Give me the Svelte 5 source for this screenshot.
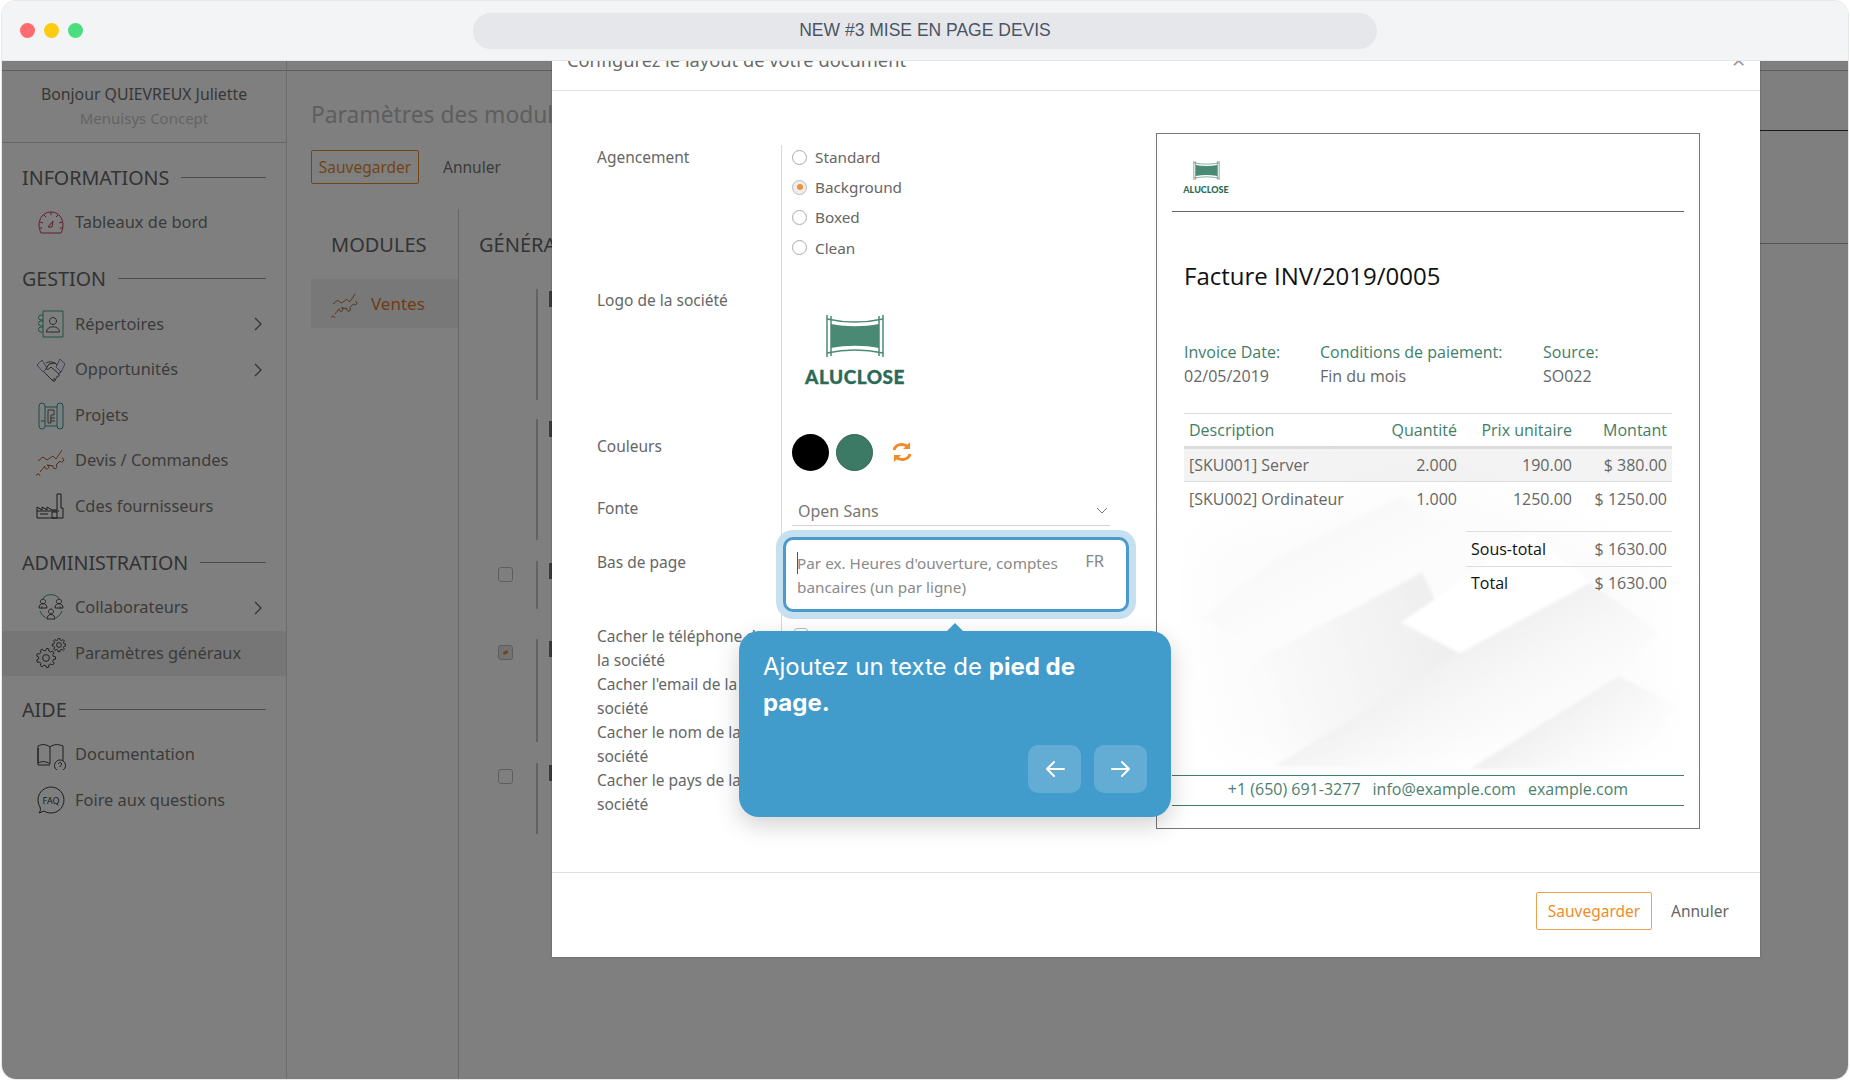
<script>
  function gear(cx, cy, r1, r2, n) {
    let d = '';
    const step = (Math.PI * 2) / n;
    for (let k = 0; k < n; k++) {
      const a = k * step;
      const pts = [[r1, a - step * 0.3], [r2, a - step * 0.18], [r2, a + step * 0.18], [r1, a + step * 0.3]];
      for (let j = 0; j < pts.length; j++) {
        const x = (cx + pts[j][0] * Math.cos(pts[j][1])).toFixed(1);
        const y = (cy + pts[j][0] * Math.sin(pts[j][1])).toFixed(1);
        d += (k === 0 && j === 0 ? 'M' : 'L') + x + ' ' + y;
      }
    }
    return d + 'Z';
  }
  function ring(cx, cy, r) {
    return `M${cx - r} ${cy}a${r} ${r} 0 1 0 ${r * 2} 0a${r} ${r} 0 1 0 ${-r * 2} 0Z`;
  }
  const I = {
    gauge: [['#c4365a', 'M5 25C0 15 5 4 15 4s15 11 10 21ZM15 4v3M8 7l2 2M22 7l-2 2M4 14l3 1M26 14l-3 1M4 20h2M26 20h-2M12 19l5-6-1 6Z']],
    contact: [['#3aa57c', 'M7 2h20v26H7ZM7 6H5a2 2 0 0 0 0 5h2M7 12H5a2 2 0 0 0 0 5h2M7 18H5a2 2 0 0 0 0 5h2'], ['#555', 'M17 8.5a3.5 3.5 0 1 1-.01 0ZM10.5 23c0-7 13-7 13 0Z']],
    hands: [['#8d7aa6', 'M1 10l5-5 5 8-4 4ZM29 9l-5-5-4 8 5 5Z'], ['#555', 'M10 8c4-2 6-1 9 0l2 2M19 8l-6 1-3 5c2 1 3 0 5-2l8 7c1 2-1 3-2 2M8 17l8 8c2 1 3-1 2-2M12 21l5 5c2 1 3-1 2-2M18 24c2 1 3-1 3-3M25 17l-3 2']],
    plan: [['#2b9a9a', 'M3 6a3 3 0 0 1 6 0v20a3 3 0 0 1-6 0ZM21 6a3 3 0 0 1 6 0v20a3 3 0 0 1-6 0ZM9 7h12M9 26h12'], ['#666', 'M12 10h6v5h-3v8h-3ZM5 21h4M14 18h5M14 21h5']],
    chart: [['#b9602c', 'M2 15l5-4 4 3 6-4 3 3 6-9M2 28a2 2 0 1 0 .01 0M4 26l5-6a2 2 0 1 0 2-1'], ['#8a5a3a', 'M11 19l6 1a2 2 0 1 0 3-1l4-4a2 2 0 1 0 2-3']],
    factory: [['#333', 'M1 27V16l5 3v-3l5 3v-3l5 3h5V3h4v14h2v10ZM1 20h22M4 23h8M16 21h5v6h-5Z']],
    team: [['#3f9a7c', 'M7 5a11 11 0 0 1 16 0M4 18a12 12 0 0 0 6 7M26 18a12 12 0 0 1-6 7M6 16a13 13 0 0 1 0-3M24 16a13 13 0 0 0 0-3'], ['#444', 'M7 6a2.5 2.5 0 1 1-.01 0ZM3 15c0-6 8-6 8 0ZM23 6a2.5 2.5 0 1 1-.01 0ZM19 15c0-6 8-6 8 0ZM15 16a2.5 2.5 0 1 1-.01 0ZM11 26c0-6 8-6 8 0Z']],
    gears: [['#444', gear(10, 20, 7.6, 9.6, 9) + ring(10, 20, 3.4) + gear(23, 7, 5.2, 6.8, 8) + ring(23, 7, 2.4)]],
    doc: [['#3a3a3a', 'M2 6c4-2 8-2 12 1v17c-4-3-8-3-12-1ZM14 7c4-3 8-3 13-1v15M2 8v17h12M24 20a5.5 5.5 0 1 0 .01 0M22.5 24c0-2 3-2 3 0 0 1.500-1.500 1.500-1.500 3']],
    faq: [['#3a3a3a', 'M4 22a13 13 0 1 1 4 4l-5 2c1-1 2-3 1-6Z']]
  };
  const sections = [
    { t: 'INFORMATIONS', items: [{ n: 'Tableaux de bord', i: 'gauge' }] },
    { t: 'GESTION', items: [
      { n: 'Répertoires', i: 'contact', c: 1 }, { n: 'Opportunités', i: 'hands', c: 1 }, { n: 'Projets', i: 'plan' },
      { n: 'Devis / Commandes', i: 'chart' }, { n: 'Cdes fournisseurs', i: 'factory' }] },
    { t: 'ADMINISTRATION', items: [{ n: 'Collaborateurs', i: 'team', c: 1 }, { n: 'Paramètres généraux', i: 'gears', a: 1 }] },
    { t: 'AIDE', items: [{ n: 'Documentation', i: 'doc' }, { n: 'Foire aux questions', i: 'faq' }] }
  ];
  const bars = [
    { h: 111, m: 19 }, { h: 121, m: 21 }, { h: 48, m: 30, box: 1 }, { h: 103, m: 21, box: 2 }, { h: 71, m: 0, box: 1 }
  ];
  const radios = ['Standard', 'Background', 'Boxed', 'Clean'];
  const hides = ['Cacher le téléphone de la société', "Cacher l'email de la société", 'Cacher le nom de la société', 'Cacher le pays de la société'];
  const lines = [
    { d: '[SKU001] Server', q: '2.000', p: '190.00', m: '$ 380.00' },
    { d: '[SKU002] Ordinateur', q: '1.000', p: '1250.00', m: '$ 1250.00' }
  ];
</script>

{#snippet logo(cls)}
  <div class="logo {cls}">
    <svg viewBox="0 0 58 42" aria-hidden="true">
      <path d="M1 0v42M5 1v40M53 1v40M57 0v42" class="posts" />
      <path d="M1 4c18 4 38 4 56 0M1 38c18-4 38-4 56 0" class="posts" />
      <path d="M5 9c16 3 32 3 48 0v24c-16-3-32-3-48 0Z" class="cloth" />
    </svg>
    <span>ALUCLOSE</span>
  </div>
{/snippet}

<div class="window">
  <header class="titlebar">
    <div class="dots"><i class="red"></i><i class="yellow"></i><i class="green"></i></div>
    <div class="pill">NEW #3 MISE EN PAGE DEVIS</div>
  </header>

  <div class="stage">
    <aside class="sidebar">
      <div class="strip"></div>
      <div class="hello">
        <div class="who">Bonjour QUIEVREUX Juliette</div>
        <div class="org">Menuisys Concept</div>
      </div>
      <nav>
        {#each sections as s}
          <section>
            <h3><span>{s.t}</span><b></b></h3>
            {#each s.items as it}
              <div class="item" class:active={it.a}>
                <svg class="ico" viewBox="0 0 30 30" aria-hidden="true">
                  {#each I[it.i] as p}<path d={p[1]} stroke={p[0]} />{/each}
                  {#if it.i === 'faq'}<text x="15" y="18.500" class="faqt">FAQ</text>{/if}
                </svg>
                <span class="item-t">{it.n}</span>
                {#if it.c}
                  <svg class="chev" viewBox="0 0 8 14" aria-hidden="true"><path d="M1 1l6 6-6 6" /></svg>
                {/if}
              </div>
            {/each}
          </section>
        {/each}
      </nav>
    </aside>

    <main class="main">
      <div class="strip"></div>
      <div class="main-row">
        <div class="main-left">
          <h1>Paramètres des modules</h1>
          <div class="actions">
            <button class="ghost-save">Sauvegarder</button>
            <button class="ghost">Annuler</button>
          </div>
          <div class="panels">
            <div class="modules">
              <h2>MODULES</h2>
              <div class="mod-row">
                <svg class="ico-s" viewBox="0 0 30 30" aria-hidden="true">
                  {#each I.chart as p}<path d={p[1]} stroke={p[0]} />{/each}
                </svg>
                <span>Ventes</span>
              </div>
            </div>
            <div class="general">
              <h2>GÉNÉRAL</h2>
              <div class="settings">
                {#each bars as b}
                  <div class="setting" style="height:{b.h}px;margin-bottom:{b.m}px">
                    <div class="slot">
                      {#if b.box}<i class="chk" class:on={b.box === 2}></i>{/if}
                    </div>
                    <div class="bar"><i></i></div>
                  </div>
                {/each}
              </div>
            </div>
          </div>
        </div>
        <div class="rail"><div></div></div>
      </div>
    </main>

    <div class="overlay"></div>

    <div class="modal">
      <div class="m-head">
        <span>Configurez le layout de votre document</span>
        <span class="x">×</span>
      </div>

      <div class="m-body">
        <div class="form">
          <div class="row r1">
            <span class="lab">Agencement</span>
            <div class="val radios">
              {#each radios as r, i}
                <div class="radio"><i class:sel={i === 1}></i><span>{r}</span></div>
              {/each}
            </div>
          </div>
          <div class="row r2">
            <span class="lab">Logo de la société</span>
            <div class="val logo-cell">{@render logo('big')}</div>
          </div>
          <div class="row r3">
            <span class="lab">Couleurs</span>
            <div class="val colors">
              <i class="c1"></i><i class="c2"></i>
              <svg viewBox="0 0 20 22" aria-hidden="true">
                <path d="M2 9a8 7 0 0 1 14-3M18 13a8 7 0 0 1-14 3" />
                <path d="M18 1v7h-7ZM2 21v-7h7Z" class="solid" />
              </svg>
            </div>
          </div>
          <div class="row r4">
            <span class="lab">Fonte</span>
            <div class="val">
              <div class="select">
                <span>Open Sans</span>
                <svg viewBox="0 0 12 7" aria-hidden="true"><path d="M1 1l5 5 5-5" /></svg>
              </div>
            </div>
          </div>
          <div class="row r5">
            <span class="lab">Bas de page</span>
            <div class="val">
              <div class="foot-box">
                <div class="ph"><i class="caret"></i>Par ex. Heures d'ouverture, comptes bancaires (un par ligne)</div>
                <span class="fr">FR</span>
              </div>
            </div>
          </div>
          {#each hides as h}
            <div class="row r6">
              <span class="lab">{h}</span>
              <div class="val"><i class="mini"></i></div>
            </div>
          {/each}
        </div>

        <div class="invoice">
          <svg class="wash" viewBox="1156 133 544 696" aria-hidden="true">
            <defs>
              <linearGradient id="gl" gradientUnits="userSpaceOnUse" x1="1250" y1="720" x2="1460" y2="654">
                <stop offset="0" stop-color="#eeeeee" stop-opacity="0" />
                <stop offset="1" stop-color="#eeeeee" />
              </linearGradient>
              <linearGradient id="gr" gradientUnits="userSpaceOnUse" x1="1490" y1="620" x2="1550" y2="730">
                <stop offset="0" stop-color="#eeeeee" />
                <stop offset="1" stop-color="#f8f8f8" stop-opacity="0" />
              </linearGradient>
              <linearGradient id="gb" gradientUnits="userSpaceOnUse" x1="1545" y1="723" x2="1600" y2="795">
                <stop offset="0" stop-color="#f1f1f1" />
                <stop offset="1" stop-color="#f8f8f8" stop-opacity="0" />
              </linearGradient>
              <linearGradient id="gu" gradientUnits="userSpaceOnUse" x1="1300" y1="540" x2="1340" y2="620">
                <stop offset="0" stop-color="#f8f8f8" />
                <stop offset="1" stop-color="#fbfbfb" stop-opacity="0" />
              </linearGradient>
              <filter id="soft"><feGaussianBlur stdDeviation="1.500" /></filter>
              <filter id="soft2"><feGaussianBlur stdDeviation="22" /></filter>
            </defs>
            <path d="M1195 540l240-70 215 90 15 190-440 10-30-130Z" fill="#fcfcfc" filter="url(#soft2)" />
            <g filter="url(#soft)">
              <path d="M1277 557l124-60 120 72-60 85-199 4-60-40Z" fill="url(#gu)" />
              <path d="M1260 658l162-85 38 81-186 113-80-40Z" fill="url(#gl)" />
              <path d="M1401 623l59 31 131-71-60-50Z" fill="#fff" />
              <path d="M1460 654l131-71 70 50-42 44-149 93-196-3Z" fill="url(#gr)" />
              <path d="M1470 770l149-93 60 30-40 63Z" fill="url(#gb)" />
            </g>
          </svg>
          <div class="i-top">{@render logo('small')}</div>
          <h4>Facture INV/2019/0005</h4>
          <div class="meta">
            <div class="m1"><b>Invoice Date:</b><span>02/05/2019</span></div>
            <div class="m2"><b>Conditions de paiement:</b><span>Fin du mois</span></div>
            <div class="m3"><b>Source:</b><span>SO022</span></div>
          </div>
          <table class="lines">
            <thead>
              <tr><th class="d">Description</th><th>Quantité</th><th>Prix unitaire</th><th>Montant</th></tr>
            </thead>
            <tbody>
              {#each lines as l, i}
                <tr class:shade={i === 0}><td class="d">{l.d}</td><td>{l.q}</td><td>{l.p}</td><td>{l.m}</td></tr>
              {/each}
            </tbody>
          </table>
          <div class="totals">
            <div><span>Sous-total</span><em>$ 1630.00</em></div>
            <div><span>Total</span><em>$ 1630.00</em></div>
          </div>
          <div class="i-foot">
            <span>+1 (650) 691-3277</span><span>info@example.com</span><span>example.com</span>
          </div>
        </div>
      </div>

      <div class="m-foot">
        <button class="save">Sauvegarder</button>
        <button class="cancel">Annuler</button>
      </div>

      <div class="tip">
        <p>Ajoutez un texte de <strong>pied de page.</strong></p>
        <div class="tip-nav">
          <button aria-label="Précédent"><svg viewBox="0 0 20 18"><path d="M19 9H2M9 2L2 9l7 7" /></svg></button>
          <button aria-label="Suivant"><svg viewBox="0 0 20 18"><path d="M1 9h17M11 2l7 7-7 7" /></svg></button>
        </div>
      </div>
    </div>
  </div>
</div>

<style>
  :global(body) { margin: 0; background: #fff; }
  * { box-sizing: border-box; }
  .window {
    width: 1846px; height: 1078px; margin: 1px 2px;
    border-radius: 14px; overflow: hidden;
    display: flex; flex-direction: column;
    box-shadow: 0 0 0 1px #e8e8e8;
    font-family: "Noto Sans", sans-serif; color: #666;
  }
  .titlebar { height: 60px; background: #f3f4f6; display: flex; align-items: center; position: relative; flex: none; border-bottom: 1px solid #e6e7e9; }
  .dots { display: flex; gap: 9px; margin-left: 18px; margin-top: -1px; }
  .dots i { width: 15px; height: 15px; border-radius: 50%; display: block; }
  .red { background: #ff6b6f; } .yellow { background: #fdcb12; } .green { background: #4ade80; }
  .pill {
    width: 904px; height: 36px; border-radius: 18px; background: #e5e7eb;
    margin-left: 390px;
    display: flex; align-items: center; justify-content: center;
    font: 17.500px "Liberation Sans", sans-serif; color: #4b5563;
  }
  .stage { flex: 1; position: relative; display: flex; overflow: hidden; background: #fff; }
  .strip { height: 10px; border-bottom: 1px solid #b8b8b8; }

  .sidebar { width: 285px; flex: none; border-right: 1px solid #d8d8d8; background: #fff; }
  .hello { height: 72px; border-bottom: 1px solid #ccc; text-align: center; padding-top: 11px; }
  .who { font-size: 15.800px; line-height: 24px; color: #6e6e6e; }
  .org { font-size: 15px; line-height: 24px; color: #c8c8c8; }
  nav { padding: 11px 0 0 0; }
  section { margin-bottom: 10px; }
  h3 { margin: 0; height: 46px; padding: 0 20px; display: flex; align-items: center; gap: 12px; font-size: 19.700px; font-weight: 400; color: #666; }
  h3 b { flex: 1; height: 1px; background: #999; }
  .item { height: 45.500px; display: flex; align-items: center; padding-left: 34px; font-size: 16.400px; color: #777; }
  .item-t { margin-top: -2px; }
  .item.active { background: #ececec; }
  .ico { width: 30px; height: 30px; margin-right: 9px; flex: none; }
  .ico path, .ico-s path { fill: none; stroke-width: 1; }
  .faqt { font: 9px "Noto Sans", sans-serif; fill: #3a3a3a; text-anchor: middle; }
  .chev { width: 8px; height: 14px; margin-left: auto; margin-right: 24px; }
  .chev path { fill: none; stroke: #666; stroke-width: 1.300; }

  .main { flex: 1; display: flex; flex-direction: column; min-width: 0; }
  .main-row { flex: 1; display: flex; min-height: 0; }
  .main-left { flex: 1; padding-left: 24px; min-width: 0; display: flex; flex-direction: column; }
  .rail { width: 88px; padding-top: 59px; flex: none; }
  .rail div { height: 114px; border-top: 1px solid #333; border-bottom: 1px solid #aaa; }
  h1 { margin: 24px 0 0; font-size: 22.800px; font-weight: 400; line-height: 40px; color: #bcbcbc; white-space: nowrap; overflow: hidden; }
  .actions { display: flex; gap: 24px; margin-top: 15px; align-items: center; }
  button { font-family: inherit; background: none; border: 0; padding: 0; }
  .ghost-save { width: 108px; height: 34px; border: 1px solid #e58a2e; border-radius: 2px; color: #e58a2e; font-size: 15.500px; }
  .ghost { color: #777; font-size: 15.500px; }
  .panels { flex: 1; margin-top: 25px; display: flex; min-height: 0; }
  .modules { width: 148px; border-right: 1px solid #cfcfcf; flex: none; }
  h2 { margin: 0; font-size: 20px; font-weight: 400; color: #666; line-height: 26px; padding: 23px 0 0 20px; height: 70px; }
  .mod-row { height: 49px; background: #f0f0f0; display: flex; align-items: center; padding-left: 20px; gap: 12px; color: #e2762a; font-size: 17px; }
  .ico-s { width: 28px; height: 28px; }
  .general { flex: 1; }
  .settings { margin-top: 10px; padding-left: 39px; }
  .setting { display: flex; }
  .slot { width: 38px; padding-top: 6px; }
  .chk { display: block; width: 15px; height: 15px; border: 1px solid #bbb; border-radius: 3px; background: #fff; }
  .chk.on { background: #e4e4e4; box-shadow: inset 0 0 0 3px #e4e4e4; position: relative; }
  .chk.on::after { content: ""; position: absolute; left: 4px; top: 5px; width: 5px; height: 3px; background: #e58a2e; transform: rotate(-30deg); }
  .bar { border-left: 2px solid #c4c4c4; padding-left: 11px; }
  .bar i { display: block; width: 4px; height: 16px; margin-top: 2px; background: #777; }

  .overlay { position: absolute; inset: 0; background: rgba(0, 0, 0, .5); }

  .modal {
    position: absolute; left: 550px; top: 0; width: 1207.500px; height: 896px;
    background: #fff; display: flex; flex-direction: column;
    box-shadow: 0 0 2px rgba(0, 0, 0, .3);
  }
  .m-head {
    height: 30px; flex: none; border-bottom: 1px solid #dee2e6;
    display: flex; align-items: flex-end; justify-content: space-between;
    padding: 0 16px 18px 15px; overflow: hidden;
    font-size: 18.300px; line-height: 24px; color: #6a6a6a;
  }
  .x { font-size: 24px; line-height: 24px; color: #999; margin-right: -2px; }
  .m-body { flex: 1; position: relative; display: flex; padding: 42px 0 0 45px; min-height: 0; }
  .form { width: 559px; padding-top: 12px; flex: none; font-size: 15.500px; color: #666; }
  .row { display: flex; line-height: 24px; }
  .lab { width: 184px; flex: none; padding-right: 12px; }
  .val { flex: 1; border-left: 1px solid #d8d8d8; padding-left: 10px; }
  .r1 { height: 143px; } .r2 { height: 146px; } .r3 { height: 62px; } .r4 { height: 54px; } .r5 { height: 74px; } .r6 { height: 48px; }
  .radio { height: 30.200px; display: flex; align-items: center; gap: 8px; margin-top: -3px; margin-bottom: 3px; font-size: 15.300px; }
  .radio i { width: 15px; height: 15px; border-radius: 50%; border: 1px solid #aaa; display: block; position: relative; }
  .radio i.sel { background: #eee; border-color: #bbb; }
  .radio i.sel::after { content: ""; position: absolute; inset: 3.500px; border-radius: 50%; background: #f0913a; }
  .logo { display: flex; flex-direction: column; align-items: center; }
  .logo svg { display: block; overflow: visible; }
  .logo span { font-family: Lato, sans-serif; font-weight: 900; color: #2c6a55; line-height: 1; }
  .posts { fill: none; stroke: #4d8a76; stroke-width: 1.500; }
  .cloth { fill: #4a8a74; }
  .logo-cell { padding-top: 27px; padding-left: 23px; }
  .big { width: 100px; }
  .big svg { width: 58px; height: 42px; }
  .big span { font-size: 19px; margin-top: 10px; letter-spacing: .5px; -webkit-text-stroke: .3px #2c6a55; }
  .colors { display: flex; align-items: flex-start; gap: 7px; }
  .colors i { width: 37px; height: 37px; border-radius: 50%; display: block; }
  .c1 { background: #000; } .c2 { background: #3c7a65; border: 1px solid #2f6a55; }
  .colors svg { width: 20px; height: 22px; margin: 7px 0 0 12px; }
  .colors path { fill: none; stroke: #f28c28; stroke-width: 3; }
  .colors path.solid { fill: #f28c28; stroke: none; }
  .select { width: 318px; height: 30px; border-bottom: 1px solid #d0d4d8; display: flex; align-items: center; justify-content: space-between; padding: 0 2px 0 6px; color: #777; font-size: 16px; }
  .select svg { width: 12px; height: 7px; }
  .select path { fill: none; stroke: #777; stroke-width: 1; }
  .foot-box {
    width: 346px; height: 75px; margin: -13px 0 0 -9px; padding: 11px 22px 0 11px;
    border: 3px solid #4a9bcc; border-radius: 10px; background: #fff;
    box-shadow: 0 0 0 7px #c6e0ef;
    display: flex; justify-content: space-between;
    position: relative;
  }
  .ph { width: 272px; color: #8a8a8a; font-size: 15.300px; position: relative; }
  .caret { position: absolute; left: 0; top: 1px; width: 1px; height: 22px; background: #555; }
  .fr { color: #888; font-size: 16.500px; margin-top: -2px; }
  .mini { display: block; width: 14px; height: 14px; border: 1px solid #bbb; border-radius: 3px; margin: 4px 0 0 2px; }

  .invoice {
    width: 544px; height: 696px; flex: none;
    border: 1px solid #777; position: relative; overflow: hidden;
    display: flex; flex-direction: column; padding: 0 15px 22px;
    font-family: "Open Sans", sans-serif; font-size: 16px; color: #666;
  }
  .wash { position: absolute; inset: 0; width: 100%; height: 100%; }
  .invoice > :not(.wash) { position: relative; }
  .i-top { height: 78px; flex: none; border-bottom: 1px solid #666; padding: 27px 0 0 12px; }
  .small { width: 44px; }
  .small svg { width: 27px; height: 19px; }
  .small span { font-size: 9px; margin-top: 5px; }
  h4 { margin: 47px 0 0 12px; font-size: 24px; font-weight: 400; color: #111; line-height: 34px; }
  .meta { display: flex; margin: 47px 0 0 12px; line-height: 24px; }
  .meta div { display: flex; flex-direction: column; }
  .meta b { font-weight: 400; color: #3f7e68; }
  .m1 { width: 136px; } .m2 { width: 223px; }
  .lines { border-collapse: collapse; margin: 25px 0 0 12px; width: 488px; table-layout: fixed; border-top: 1px solid #dcdcdc; }
  th, td { text-align: right; padding: 0 5px; font-weight: 400; white-space: nowrap; }
  th:nth-child(1) { width: 196px; } th:nth-child(2) { width: 82px; } th:nth-child(3) { width: 115px; }
  .lines .d { text-align: left; }
  th { color: #3f7e68; height: 34px; border-bottom: 3px solid #ddd; }
  td { height: 34px; border-bottom: 1px solid #ddd; }
  tr:last-child td { border-bottom: 0; }
  .shade td { background: rgba(225, 225, 225, .4); }
  .totals { width: 206px; align-self: flex-end; margin: 15px 12px 0 0; border-top: 1px solid #ddd; }
  .totals div { height: 34px; display: flex; justify-content: space-between; align-items: center; padding: 0 5px; color: #111; }
  .totals div + div { border-top: 1px solid #ddd; }
  .totals em { font-style: normal; color: #666; }
  .i-foot { margin-top: auto; height: 31px; flex: none; border-top: 1px solid #3f7e68; border-bottom: 1px solid #3f7e68; display: flex; justify-content: center; align-items: center; gap: 12px; color: #4c7f70; padding-bottom: 4px; white-space: nowrap; }

  .m-foot { height: 85px; flex: none; border-top: 1px solid #dee2e6; display: flex; align-items: flex-start; padding: 19px 0 0 984px; gap: 19px; }
  .save { width: 116px; height: 38px; border: 1px solid #f0a04c; border-radius: 2px; color: #f08c2a; font-size: 15.500px; }
  .cancel { height: 38px; color: #666; font-size: 15.500px; }

  .tip {
    position: absolute; left: 187px; top: 570px; width: 432px; height: 186px;
    background: #419bcb; border-radius: 20px; color: #fff;
    box-shadow: 0 8px 24px rgba(0, 0, 0, .18);
    padding: 18px 24px;
    font-family: Inter, sans-serif;
  }
  .tip::before { content: ""; position: absolute; left: 208px; top: -8px; border: 8px solid transparent; border-top: 0; border-bottom-color: #419bcb; }
  .tip p { margin: 0; font-size: 24px; line-height: 36px; width: 340px; }
  .tip strong { font-weight: 700; }
  .tip-nav { position: absolute; right: 24px; bottom: 24px; display: flex; gap: 13px; }
  .tip-nav button { width: 53px; height: 48px; background: rgba(255, 255, 255, .18); border-radius: 10px; display: flex; align-items: center; justify-content: center; }
  .tip-nav svg { width: 20px; height: 18px; }
  .tip-nav path { fill: none; stroke: #fff; stroke-width: 2; stroke-linecap: round; stroke-linejoin: round; }
</style>
